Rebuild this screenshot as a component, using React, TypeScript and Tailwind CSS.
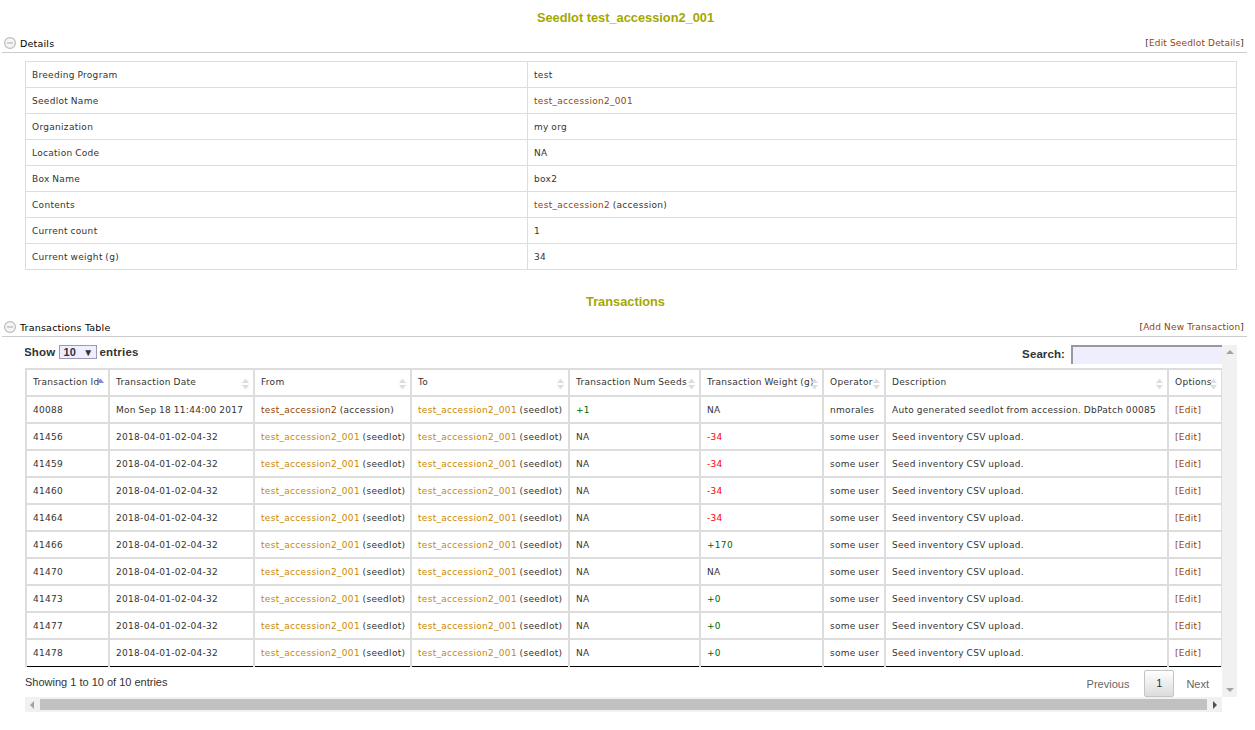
import React from 'react';

const details: [string, React.ReactNode][] = [
  ['Breeding Program', 'test'],
  ['Seedlot Name', <a className="text-[#994400]">test_accession2_001</a>],
  ['Organization', 'my org'],
  ['Location Code', 'NA'],
  ['Box Name', 'box2'],
  ['Contents', <><a className="text-[#994400]">test_accession2</a> (accession)</>],
  ['Current count', '1'],
  ['Current weight (g)', '34'],
];

const columns = [
  { label: 'Transaction Id', width: 'w-[83px]', active: true },
  { label: 'Transaction Date', width: 'w-[145px]' },
  { label: 'From', width: 'w-[157px]' },
  { label: 'To', width: 'w-[158px]' },
  { label: 'Transaction Num Seeds', width: 'w-[131px]' },
  { label: 'Transaction Weight (g)', width: 'w-[123px]' },
  { label: 'Operator', width: 'w-[62px]' },
  { label: 'Description', width: 'w-[283px]' },
  { label: 'Options', width: 'w-[54px]' },
];

const upload = 'Seed inventory CSV upload.';
const rows = [
  { id: '41456', seeds: 'NA', weight: '-34' },
  { id: '41459', seeds: 'NA', weight: '-34' },
  { id: '41460', seeds: 'NA', weight: '-34' },
  { id: '41464', seeds: 'NA', weight: '-34' },
  { id: '41466', seeds: 'NA', weight: '+170' },
  { id: '41470', seeds: 'NA', weight: 'NA' },
  { id: '41473', seeds: 'NA', weight: '+0' },
  { id: '41477', seeds: 'NA', weight: '+0' },
  { id: '41478', seeds: 'NA', weight: '+0' },
];

function Amount({ value }: { value: string }) {
  if (value.startsWith('+')) return <span className="text-[#006600]">{value}</span>;
  if (value.startsWith('-')) return <span className="text-[#ff0000]">{value}</span>;
  return <>{value}</>;
}

function SectionHeader({ title, action }: { title: string; action: string }) {
  return (
    <div className="mx-[2px] flex h-[19px] w-[1245px] items-center border-b border-[#cccccc] pr-[3px] pl-[2px]">
      <svg width="12" height="12" viewBox="0 0 12 12" className="mr-[4px] shrink-0">
        <circle cx="6" cy="6" r="5.4" fill="#f5f5f5" stroke="#bbbbbb" strokeWidth="1.2" />
        <rect x="3" y="5.5" width="6" height="1" fill="#aaaaaa" />
      </svg>
      <span className="mt-[2px] text-[9.5px] tracking-[0.2px] text-black">{title}</span>
      <span className="mt-[2px] ml-auto text-[9px] tracking-[0.15px] text-[#333]">
        [<a className="text-[#994400]">{action}</a>]
      </span>
    </div>
  );
}

function SortIcon({ active }: { active?: boolean }) {
  return (
    <svg width="9" height="12" viewBox="0 0 9 12" className="absolute top-[8px] right-[3px]">
      <path d="M4.5 0.5 L8 5 L1 5 Z" fill={active ? '#8888dd' : '#dddddd'} />
      {!active && <path d="M4.5 11.5 L8 7 L1 7 Z" fill="#dddddd" />}
    </svg>
  );
}

const cell = 'h-[27px] overflow-hidden border-2 border-[#dddddd] px-[6px] align-middle whitespace-nowrap';
const bodyCell = `${cell} pt-[3px]`;
const lastCell = `${cell} pt-[2px] border-b border-b-black`;

function SeedlotLink() {
  return (
    <>
      <a className="text-[#cc8800]">test_accession2_001</a> (seedlot)
    </>
  );
}

function Title({ children, className }: { children: React.ReactNode; className: string }) {
  return (
    <h1 className={`w-[1251px] text-center font-['Liberation_Sans',sans-serif] text-[12.8px] leading-[15px] font-bold text-[#a3a800] ${className}`}>
      {children}
    </h1>
  );
}

export default function App() {
  return (
    <div className="h-[730px] w-[1255px] overflow-hidden bg-white font-['DejaVu_Sans',sans-serif] text-[9px] text-[#333]">
      <Title className="pt-[10px] pb-[9px]">Seedlot test_accession2_001</Title>
      <SectionHeader title="Details" action="Edit Seedlot Details" />

      <table className="mt-[8px] ml-[25px] w-[1212px] table-fixed border-collapse tracking-[0.3px] [word-spacing:-0.5px]">
        <tbody>
          {details.map(([label, value]) => (
            <tr key={label} className="h-[26px]">
              <td className="w-[502px] border border-[#dddddd] px-[6px] pt-[2px]">{label}</td>
              <td className="border border-[#dddddd] px-[6px] pt-[2px]">{value}</td>
            </tr>
          ))}
        </tbody>
      </table>

      <Title className="mt-[24px] mb-[9px]">Transactions</Title>
      <SectionHeader title="Transactions Table" action="Add New Transaction" />

      <div className="mt-[8px] ml-[25px] flex h-[352px] w-[1212px]">
        <div className="w-[1197px] overflow-hidden">
          <div className="flex h-[23px] items-start font-['Liberation_Sans',sans-serif] text-[11.5px] font-bold tracking-[0.2px]">
            <span className="-ml-[1px] leading-[14px]">Show</span>
            <span className="mr-[2px] ml-[4px] flex h-[14px] w-[38px] items-center justify-between border border-[#9a9ab0] bg-[#eeeeff] px-[3px] text-[11px]">
              10 <span className="text-[10px]">▼</span>
            </span>
            <span className="leading-[14px]">entries</span>
            <span className="mt-[2px] mr-[6px] ml-auto leading-[14px] tracking-[0.1px]">Search:</span>
            <span className="h-[19px] w-[151px] shrink-0 border-t-2 border-l-2 border-[#999] bg-[#eeeeff]" />
          </div>
          <table className="w-[1196px] table-fixed border-collapse tracking-[0.3px] [word-spacing:-0.5px]">
            <thead>
              <tr>
                {columns.map((c) => (
                  <th key={c.label} className={`${cell} ${c.width} relative text-left font-normal`}>
                    {c.label}
                    <SortIcon active={c.active} />
                  </th>
                ))}
              </tr>
            </thead>
            <tbody>
              <tr>
                <td className={bodyCell}>40088</td>
                <td className={bodyCell}>Mon Sep 18 11:44:00 2017</td>
                <td className={bodyCell}>
                  <a className="text-[#994400]">test_accession2</a> (accession)
                </td>
                <td className={bodyCell}><SeedlotLink /></td>
                <td className={bodyCell}><Amount value="+1" /></td>
                <td className={bodyCell}>NA</td>
                <td className={bodyCell}>nmorales</td>
                <td className={bodyCell}>Auto generated seedlot from accession. DbPatch 00085</td>
                <td className={bodyCell}><span className="text-[#994400]">[Edit]</span></td>
              </tr>
              {rows.map((r, i) => {
                const c = i === rows.length - 1 ? lastCell : bodyCell;
                return (
                  <tr key={r.id}>
                    <td className={c}>{r.id}</td>
                    <td className={c}>2018-04-01-02-04-32</td>
                    <td className={c}><SeedlotLink /></td>
                    <td className={c}><SeedlotLink /></td>
                    <td className={c}>{r.seeds}</td>
                    <td className={c}><Amount value={r.weight} /></td>
                    <td className={c}>some user</td>
                    <td className={c}>{upload}</td>
                    <td className={c}><span className="text-[#994400]">[Edit]</span></td>
                  </tr>
                );
              })}
            </tbody>
          </table>
          <div className="flex h-[30px] items-start font-['Liberation_Sans',sans-serif] text-[11px]">
            <span className="mt-[7px]">Showing 1 to 10 of 10 entries</span>
            <span className="mt-[9px] ml-auto text-[#666]">Previous</span>
            <span className="mt-[3px] mr-[12px] ml-[15px] flex h-[27px] w-[30px] items-center justify-center rounded-[2px] border border-[#c4c4c4] bg-gradient-to-b from-white to-[#dcdcdc]">
              1
            </span>
            <span className="mt-[9px] mr-[13px] text-[#666]">Next</span>
          </div>
        </div>
        <div className="flex w-[15px] flex-col items-center justify-between bg-[#f1f1f1] py-[5px]">
          <span className="h-0 w-0 border-x-[4px] border-b-[4px] border-x-transparent border-b-[#a3a3a3]" />
          <span className="h-0 w-0 border-x-[4px] border-t-[4px] border-x-transparent border-t-[#a3a3a3]" />
        </div>
      </div>
      <div className="ml-[25px] flex h-[15px] w-[1197px] items-center bg-[#f1f1f1] py-[2px]">
        <span className="ml-[5px] h-0 w-0 border-y-[4px] border-r-[4px] border-y-transparent border-r-[#a3a3a3]" />
        <span className="mx-[6px] h-full flex-1 bg-[#c1c1c1]" />
        <span className="mr-[5px] h-0 w-0 border-y-[4px] border-l-[4px] border-y-transparent border-l-[#505050]" />
      </div>
    </div>
  );
}
